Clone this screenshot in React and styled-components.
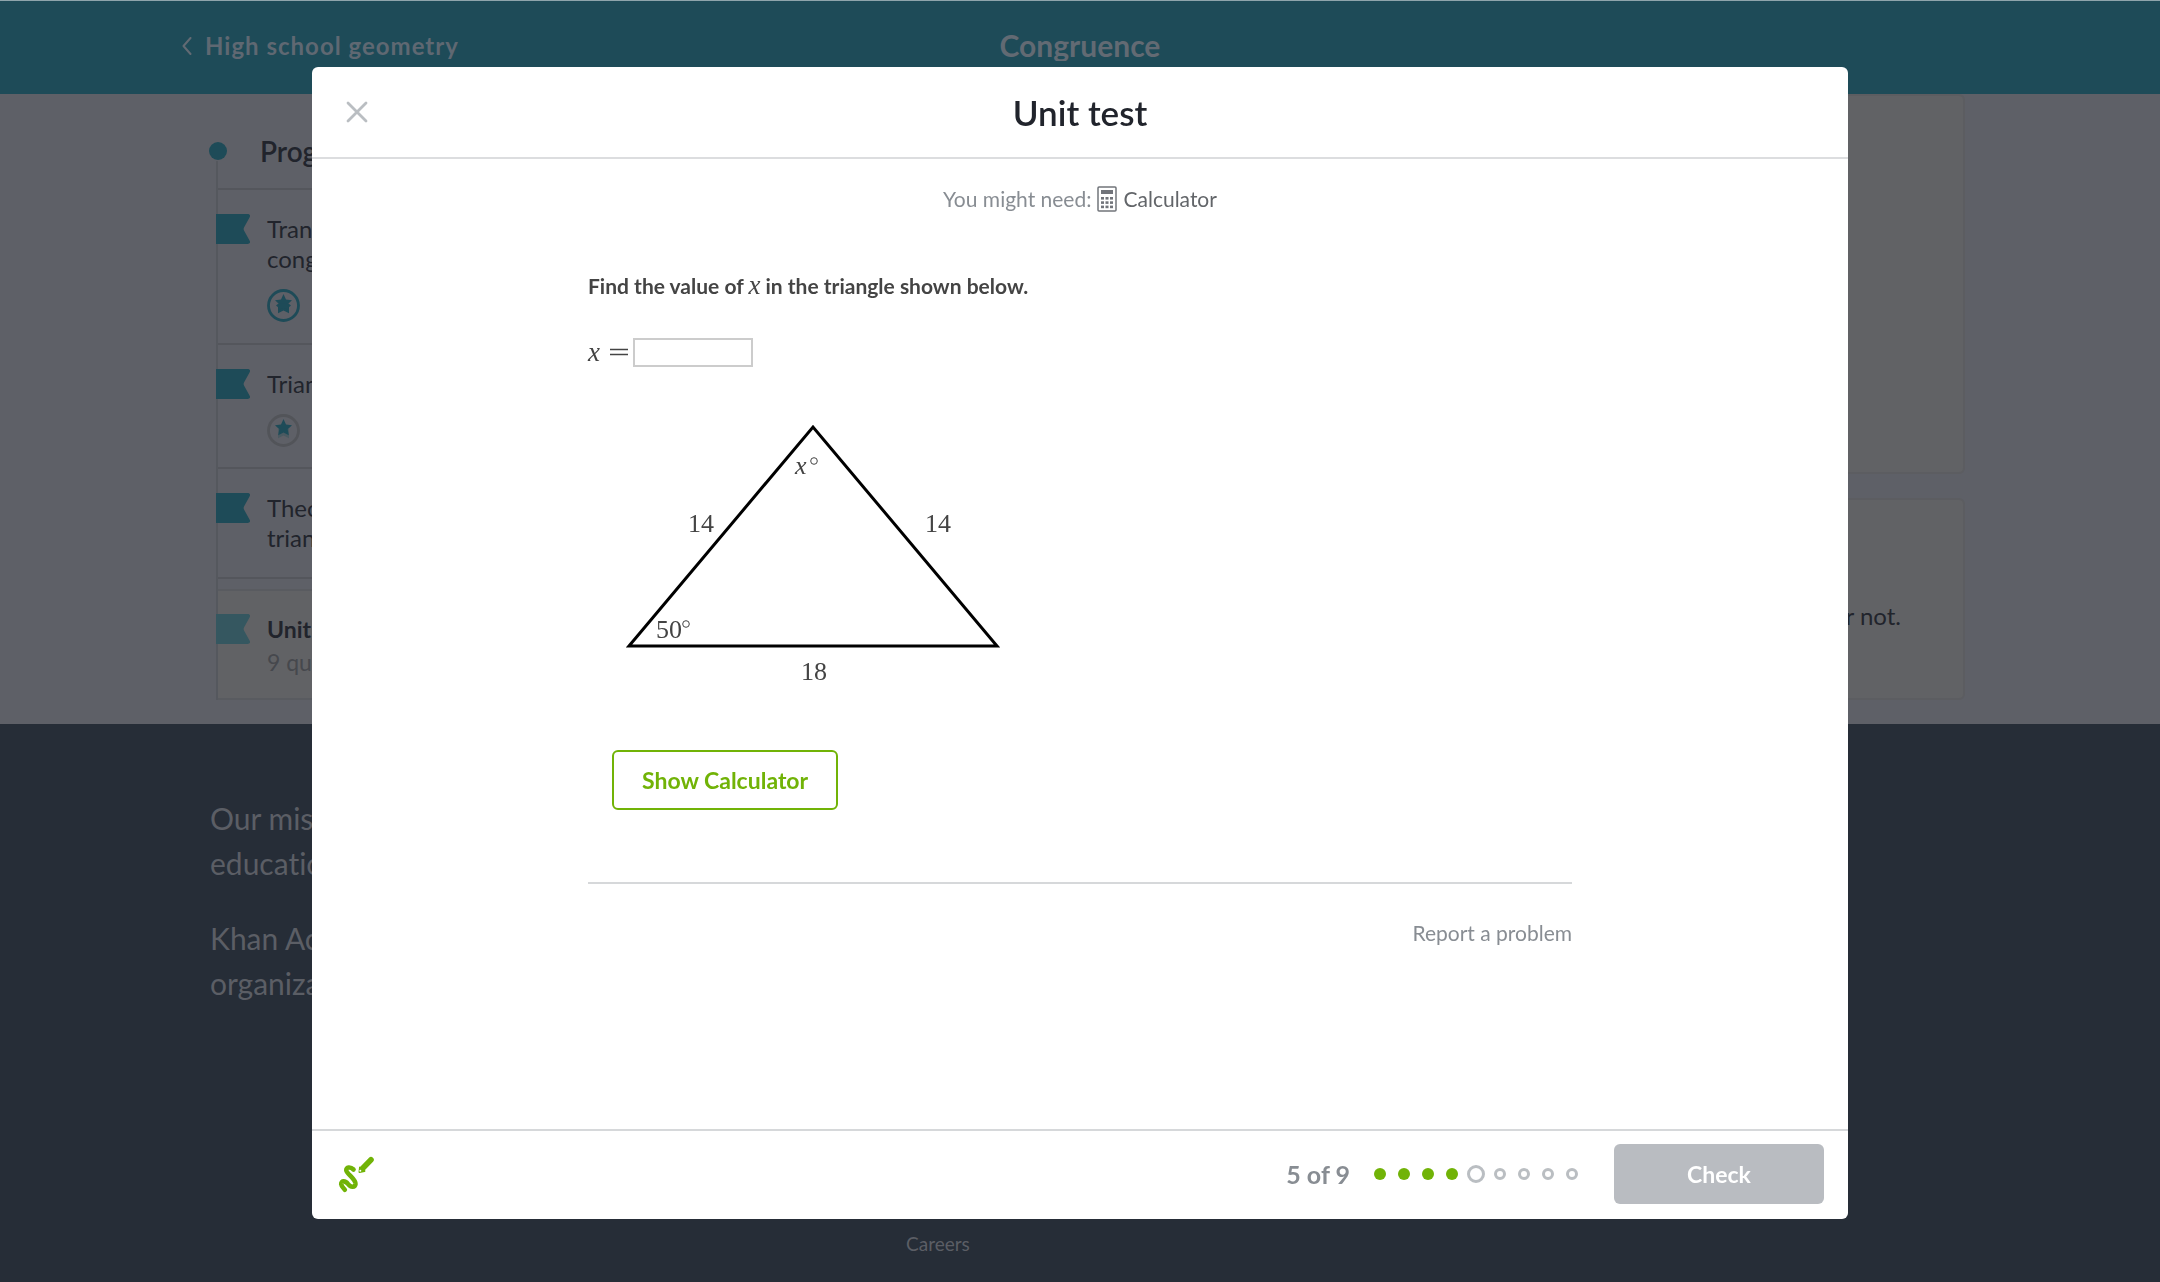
import { useState } from "react";
import styled, { createGlobalStyle } from "styled-components";

const lessons = [
    { id: 1, title: ["Transformations &", "congruence"], badge: "done" },
    { id: 2, title: ["Triangle congruence"], badge: "started" },
    { id: 3, title: ["Theorems concerning", "triangle properties"] },
];

const steps = ["done", "done", "done", "done", "current", "todo", "todo", "todo", "todo"];

function Flag({ color }) {
    return (
        <FlagIcon viewBox="0 0 34 30" aria-hidden="true">
            <path fill={color} d="M0 0H31.500C33.500 0 34.600 1.300 33.800 2.900L28 13.500C27.500 14.500 27.500 15.500 28 16.500L33.800 27.100C34.600 28.700 33.500 30 31.500 30H0Z" />
        </FlagIcon>
    )
}

function Badge({ done }) {
    return (
        <BadgeIcon viewBox="0 0 33 33" aria-hidden="true">
            <circle cx="16.500" cy="16.500" r="15" fill="none" stroke={done ? "#1e4b58" : "#525459"} strokeWidth="2.800" />
            <path fill={done ? "#1e4b58" : "#4b5a61"} d="M11 15H22V24.300L16.500 21.500L11 24.300Z" />
            <path fill="#1e4b58" d="M16.500 5L19 10.400L25 11.200L20.700 15.300L21.800 21.200L16.500 18.400L11.200 21.200L12.300 15.300L8 11.200L14 10.400Z" />
            {done && <path fill="#1e4b58" d="M9 16.500L11.500 14.500H21.500L24 16.500L21 19H12Z" />}
        </BadgeIcon>
    )
}

function CalculatorIcon() {
    return (
        <CalcSvg viewBox="0 0 20 26" aria-hidden="true">
            <rect x="1" y="1" width="18" height="24" rx="1" fill="none" stroke="#71747a" strokeWidth="1.500" />
            <rect x="4" y="4" width="12" height="4" fill="#71747a" />
            {[11, 15.3, 19.6].map((y) => [4, 8.5, 13].map((x) => (
                <rect key={`${x}-${y}`} x={x} y={y} width="3" height="2.600" fill="#71747a" />
            )))}
        </CalcSvg>
    )
}

function Triangle() {
    return (
        <Figure viewBox="0 0 400 280" role="img" aria-label="Triangle with sides 14, 14 and 18">
            <path d="M29 232L213 13L397 232Z" fill="none" stroke="#000" strokeWidth="3" />
            <text x="195" y="60" fontStyle="italic">x</text>
            <circle cx="214" cy="47" r="3.300" />
            <text x="101" y="118" textAnchor="middle">14</text>
            <text x="338" y="118" textAnchor="middle">14</text>
            <text x="56" y="224">50</text>
            <circle cx="86" cy="210" r="3.300" />
            <text x="214" y="266" textAnchor="middle">18</text>
        </Figure>
    )
}

function App() {
    const [answer, setAnswer] = useState("");

    return (
        <>
            <GlobalStyle />
            <Page>
                <TopBar>
                    <BackLink href="#">
                        <svg width="10" height="18" viewBox="0 0 10 18" fill="none" stroke="#626a73" strokeWidth="2" strokeLinecap="round" strokeLinejoin="round">
                            <path d="M8.500 1L1.500 9L8.500 17" />
                        </svg>
                        High school geometry
                    </BackLink>
                    <UnitName>Congruence</UnitName>
                </TopBar>

                <Content>
                    <Sidebar>
                        <Progress>
                            <Dot />
                            Progress
                        </Progress>
                        <Lessons>
                            {lessons.map((lesson) => (
                                <Lesson key={lesson.id} $badge={lesson.badge}>
                                    <Flag color="#1e4b58" />
                                    <div>
                                        {lesson.title.map((line) => <Line key={line}>{line}</Line>)}
                                        {lesson.badge && <Badge done={lesson.badge === "done"} />}
                                    </div>
                                </Lesson>
                            ))}
                            <TestCard>
                                <Flag color="#355760" />
                                <div>
                                    <TestTitle>Unit test</TestTitle>
                                    <Muted>9 questions</Muted>
                                </div>
                            </TestCard>
                        </Lessons>
                    </Sidebar>
                    <Cards>
                        <Card $height={380} />
                        <Card $height={202}>
                            <CardText>Keep practicing, whether you are ready or not.</CardText>
                        </Card>
                    </Cards>
                </Content>

                <Footer>
                    <Mission>
                        <p>Our mission is to provide a free, world-class<br />education to anyone, anywhere.</p>
                        <p>Khan Academy is a 501(c)(3) nonprofit<br />organization.</p>
                    </Mission>
                    <FooterLink href="#">Careers</FooterLink>
                </Footer>
            </Page>

            <Overlay>
                <Modal role="dialog" aria-label="Unit test">
                    <ModalHeader>
                        <CloseButton aria-label="Close">
                            <svg width="22" height="22" viewBox="0 0 22 22" stroke="#babec2" strokeWidth="2.800" strokeLinecap="round">
                                <path d="M2 2L20 20M20 2L2 20" />
                            </svg>
                        </CloseButton>
                        <ModalTitle>Unit test</ModalTitle>
                    </ModalHeader>

                    <ModalBody>
                        <Tools>
                            You might need: <CalculatorIcon /> <ToolName>Calculator</ToolName>
                        </Tools>
                        <Exercise>
                            <Question>Find the value of <MathVar>x</MathVar> in the triangle shown below.</Question>
                            <AnswerRow>
                                <label htmlFor="answer"><MathVar>x</MathVar></label>
                                <EqualSign viewBox="0 0 18 8" aria-hidden="true">
                                    <path d="M0 1.500H18M0 6.500H18" stroke="#444" strokeWidth="1.400" />
                                </EqualSign>
                                <AnswerInput id="answer" value={answer} onChange={e => setAnswer(e.target.value)} />
                            </AnswerRow>
                            <Triangle />
                            <OutlineButton>Show Calculator</OutlineButton>
                            <Divider />
                            <ReportLink href="#">Report a problem</ReportLink>
                        </Exercise>
                    </ModalBody>

                    <ModalFooter>
                        <ScratchButton aria-label="Scratchpad">
                            <svg width="36" height="37" viewBox="0 0 36 37" fill="none" stroke="#71b307" strokeLinecap="round">
                                <path strokeWidth="4.600" d="M15.500 13.500C12.500 10.500 7.800 10.800 8.300 14.500C8.800 18 17.800 23 17.500 28C17 32 12.500 31.500 10 28C7.500 24.500 3 24.500 3.200 28C3.400 30.500 5.300 32 6.800 33.700" />
                                <path strokeWidth="5.600" d="M25 12L33 3.800" />
                                <path strokeWidth="2" strokeLinejoin="round" fill="#71b307" d="M21.500 16L22 11.500L26.500 15Z" />
                                <circle cx="22.300" cy="14.800" r="1" fill="#fff" stroke="none" />
                            </svg>
                        </ScratchButton>
                        <Count>5 of 9</Count>
                        <Steps>
                            {steps.map((state, i) => <Step key={i} $state={state} />)}
                        </Steps>
                        <CheckButton disabled>Check</CheckButton>
                    </ModalFooter>
                </Modal>
            </Overlay>
        </>
    )
}

export default App;

const GlobalStyle = createGlobalStyle`
    *{
        box-sizing:border-box;
    }
    body{
        margin:0;
        background-color:#262d37;
        font-family:Lato, sans-serif;
        font-variant-ligatures:none;
        color:#21242c;
        overflow:hidden;
    }
    p{
        margin:0;
    }
    a{
        text-decoration:none;
    }
    button{
        font-family:inherit;
        cursor:pointer;
    }
`;

const Page = styled.div`
    min-height:100vh;
    background-color:#5e6067;
`;

const TopBar = styled.header`
    display:grid;
    grid-template-columns:1fr auto 1fr;
    align-items:center;
    height:94px;
    padding:0 182px 4px;
    background-color:#1e4b58;
    border-top:1px solid #8fa5ac;
`;

const BackLink = styled.a`
    display:flex;
    align-items:center;
    gap:13px;
    font-size:24px;
    font-weight:bold;
    letter-spacing:1px;
    color:#5f6872;
`;

const UnitName = styled.div`
    font-size:30px;
    font-weight:bold;
    line-height:31px;
    color:#626a73;
    overflow:hidden;
`;

const Content = styled.main`
    display:flex;
    gap:24px;
    padding:0 195px 24px 209px;
`;

const Sidebar = styled.aside`
    width:500px;
    padding-top:47px;
`;

const Progress = styled.div`
    display:flex;
    align-items:center;
    gap:33px;
    height:20px;
    font-size:28px;
    font-weight:600;
`;

const Dot = styled.span`
    width:18px;
    height:18px;
    border-radius:50%;
    background-color:#1e4b58;
`;

const Lessons = styled.div`
    margin-left:7px;
    padding-top:27px;
    border-left:2px solid #55585e;
`;

const Lesson = styled.div`
    display:flex;
    gap:17px;
    height:${props => props.$badge === "done" ? 155 : props.$badge ? 124 : 112}px;
    padding-top:24px;
    border-top:2px solid #54565c;
    border-bottom:${props => props.$badge ? "none" : "2px solid #54565c"};
    font-size:24px;
    line-height:30px;
`;

const FlagIcon = styled.svg`
    flex:none;
    width:34px;
    height:30px;
    margin-left:-2px;
`;

const BadgeIcon = styled.svg`
    display:block;
    width:33px;
    height:33px;
    margin-top:15px;
`;

const Line = styled.div`
    white-space:nowrap;
`;

const TestCard = styled.div`
    display:flex;
    gap:17px;
    height:111px;
    margin-top:10px;
    padding-top:23px;
    background-color:#616265;
    border:2px solid #595b60;
    border-left:none;
    font-size:23px;
    line-height:30px;
`;

const TestTitle = styled.div`
    font-weight:bold;
`;

const Muted = styled.div`
    margin-top:3px;
    color:#46484d;
`;

const Cards = styled.div`
    flex:1;
    display:flex;
    flex-direction:column;
    gap:24px;
`;

const Card = styled.div`
    display:flex;
    align-items:center;
    justify-content:flex-end;
    height:${props => props.$height}px;
    padding:34px 62px 0 24px;
    background-color:#616265;
    border:2px solid #5c5d61;
    border-radius:6px;
`;

const CardText = styled.p`
    font-size:24px;
    line-height:30px;
`;

const Footer = styled.footer`
    height:558px;
    padding:72px 210px 0;
    background-color:#262d37;
    color:#5b5e65;
`;

const Mission = styled.div`
    display:flex;
    flex-direction:column;
    gap:30px;
    height:436px;
    font-size:30px;
    line-height:45px;
`;

const FooterLink = styled.a`
    margin-left:696px;
    font-size:19px;
    line-height:24px;
    color:#5b5e65;
`;

const Overlay = styled.div`
    position:fixed;
    inset:0;
    display:flex;
    align-items:center;
    justify-content:center;
    padding:67px 312px 63px;
`;

const Modal = styled.section`
    display:flex;
    flex-direction:column;
    width:100%;
    height:100%;
    background-color:#fff;
    border-radius:6px;
    overflow:hidden;
`;

const ModalHeader = styled.div`
    display:grid;
    grid-template-columns:1fr auto 1fr;
    align-items:center;
    height:92px;
    padding:0 30px;
    border-bottom:2px solid #dcdddf;
`;

const CloseButton = styled.button`
    justify-self:start;
    display:flex;
    padding:4px;
    border:none;
    background:none;
`;

const ModalTitle = styled.h1`
    margin:0;
    font-size:35px;
    line-height:40px;
    font-weight:600;
`;

const ModalBody = styled.div`
    flex:1;
    padding:25px 276px 0;
`;

const Tools = styled.div`
    display:flex;
    align-items:center;
    justify-content:center;
    gap:6px;
    font-size:21px;
    line-height:30px;
    color:#888d93;
`;

const ToolName = styled.span`
    color:#626569;
`;

const CalcSvg = styled.svg`
    width:20px;
    height:26px;
`;

const Exercise = styled.div`
    display:flex;
    flex-direction:column;
    padding-top:55px;
`;

const MathVar = styled.i`
    font-family:"Liberation Serif", serif;
    font-size:27px;
    font-weight:normal;
    line-height:1;
`;

const Question = styled.p`
    font-size:21px;
    font-weight:bold;
    line-height:33px;
    color:#444;
`;

const AnswerRow = styled.div`
    display:flex;
    align-items:center;
    gap:5px;
    height:30px;
    margin-top:35px;
    color:#444;
`;

const EqualSign = styled.svg`
    width:18px;
    height:8px;
    margin-left:5px;
`;

const AnswerInput = styled.input`
    width:120px;
    height:29px;
    padding:0 6px;
    border:2px solid #ccc;
    font-size:20px;
`;

const Figure = styled.svg`
    width:400px;
    height:280px;
    margin:47px 0 0 12px;

    text{
        font-family:"Liberation Serif", serif;
        font-size:26px;
        fill:#444;
    }
    circle{
        fill:none;
        stroke:#444;
        stroke-width:1;
    }
`;

const OutlineButton = styled.button`
    align-self:flex-start;
    height:60px;
    margin:56px 0 0 24px;
    padding:0 28px;
    border:2px solid #71b307;
    border-radius:6px;
    background:none;
    color:#71b307;
    font-size:23px;
    font-weight:bold;
`;

const Divider = styled.hr`
    width:100%;
    height:2px;
    margin:72px 0 33px;
    border:none;
    background-color:#d6d8da;
`;

const ReportLink = styled.a`
    align-self:flex-end;
    font-size:21px;
    line-height:32px;
    color:#888d93;
`;

const ModalFooter = styled.div`
    display:flex;
    align-items:center;
    height:90px;
    padding:0 24px 2px;
    border-top:2px solid #d6d8da;
`;

const ScratchButton = styled.button`
    display:flex;
    margin-right:auto;
    padding:0 2px;
    border:none;
    background:none;
`;

const Count = styled.div`
    font-size:25px;
    font-weight:bold;
    color:#888d93;
`;

const Steps = styled.div`
    display:flex;
    align-items:center;
    gap:12px;
    margin:0 36px 0 24px;
`;

const Step = styled.span`
    width:${props => props.$state === "current" ? 18 : 12}px;
    height:${props => props.$state === "current" ? 18 : 12}px;
    margin:${props => props.$state === "current" ? "0 -3px" : "0"};
    border:${props => props.$state === "done" ? "none" : "3px solid #babec2"};
    border-radius:50%;
    background-color:${props => props.$state === "done" ? "#71b307" : "transparent"};
`;

const CheckButton = styled.button`
    width:210px;
    height:60px;
    border:none;
    border-radius:6px;
    background-color:#b9bcc1;
    color:#fff;
    font-size:23px;
    font-weight:bold;
`;
